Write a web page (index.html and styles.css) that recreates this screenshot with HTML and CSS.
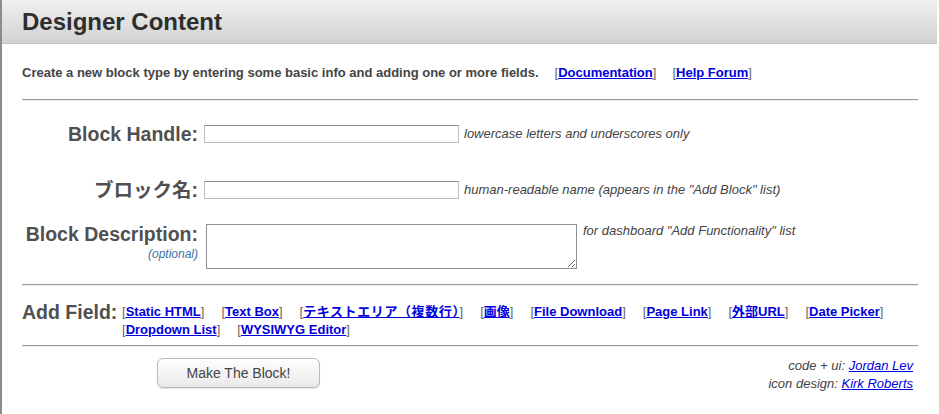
FILE: index.html
```html
<!DOCTYPE html>
<html>
<head>
<meta charset="utf-8">
<link rel="stylesheet" href="styles.css">
</head>
<body>
<div class="dialog">
  <div class="header"><h1 class="title">Designer Content</h1></div>
  <div class="content">
    <p class="intro">Create a new block type by entering some basic info and adding one or more fields.<span class="intro-links"><span class="br">[</span><a href="#">Documentation</a><span class="br">]</span></span><span class="intro-links"><span class="br">[</span><a href="#">Help Forum</a><span class="br">]</span></span></p>
    <div class="rule"></div>
    <div class="row row-handle">
      <label class="label">Block Handle:</label>
      <input class="input" type="text">
      <span class="hint">lowercase letters and underscores only</span>
    </div>
    <div class="row row-name">
      <label class="label">ブロック名:</label>
      <input class="input" type="text">
      <span class="hint">human-readable name (appears in the "Add Block" list)</span>
    </div>
    <div class="row row-desc">
      <div class="label-col">
        <label class="label">Block Description:</label>
        <span class="optional">(optional)</span>
      </div>
      <textarea class="textarea"></textarea>
      <span class="hint hint-desc">for dashboard "Add Functionality" list</span>
    </div>
    <div class="rule rule-2"></div>
    <div class="add-field">
      <span class="add-label">Add Field:</span>
      <div class="field-links">
        <span class="fl"><span class="br">[</span><a href="#">Static HTML</a><span class="br">]</span></span>
        <span class="fl"><span class="br">[</span><a href="#">Text Box</a><span class="br">]</span></span>
        <span class="fl"><span class="br">[</span><a class="jp" href="#">テキストエリア（複数行）</a><span class="br">]</span></span>
        <span class="fl"><span class="br">[</span><a href="#">画像</a><span class="br">]</span></span>
        <span class="fl"><span class="br">[</span><a href="#">File Download</a><span class="br">]</span></span>
        <span class="fl"><span class="br">[</span><a href="#">Page Link</a><span class="br">]</span></span>
        <span class="fl"><span class="br">[</span><a href="#">外部URL</a><span class="br">]</span></span>
        <span class="fl"><span class="br">[</span><a href="#">Date Picker</a><span class="br">]</span></span>
        <span class="fl"><span class="br">[</span><a href="#">Dropdown List</a><span class="br">]</span></span>
        <span class="fl"><span class="br">[</span><a href="#">WYSIWYG Editor</a><span class="br">]</span></span>
      </div>
    </div>
    <div class="rule rule-3"></div>
    <div class="footer">
      <button class="make-btn" type="button">Make The Block!</button>
      <div class="credits">
        <div>code + ui: <a href="#">Jordan Lev</a></div>
        <div>icon design: <a href="#">Kirk Roberts</a></div>
      </div>
    </div>
  </div>
</div>
</body>
</html>
```
FILE: styles.css
```css
html, body {
  margin: 0;
  padding: 0;
  background: #ffffff;
}
body {
  font-family: "Liberation Sans", Arial, "Noto Sans CJK JP", sans-serif;
  color: #444;
}
.dialog {
  height: 414px;
  border-left: 2px solid #8c8c8c;
  box-sizing: border-box;
  background: #fff;
  overflow: hidden;
}
.header {
  height: 43px;
  background: linear-gradient(#f0f0f0, #d2d2d2);
  border-bottom: 1px solid #c2c2c2;
  padding-left: 20px;
  margin-right: 2px;
}
.title {
  margin: 0;
  font-size: 24px;
  line-height: 43px;
  font-weight: bold;
  color: #2e2e2e;
}
.content {
  padding: 0 21px 0 20px;
}
.intro {
  margin: 0;
  padding-top: 20px;
  font-size: 13px;
  line-height: 18px;
  font-weight: bold;
  color: #444;
  white-space: nowrap;
}
.intro-links {
  margin-left: 16px;
  font-size: 13px;
}
.br {
  font-weight: normal;
  color: #666;
}
a {
  color: #0000dd;
  text-decoration: underline;
  font-weight: bold;
}
a.jp {
  letter-spacing: 0.6px;
}
.rule {
  margin-top: 17px;
  border-top: 1px solid #9a9a9a;
  border-bottom: 1px solid #eeeeee;
}
.row {
  display: flex;
  align-items: center;
}
.row-handle { margin-top: 24px; }
.row-name { margin-top: 38px; }
.row-desc {
  margin-top: 25px;
  align-items: flex-start;
}
.label {
  width: 176px;
  text-align: right;
  font-size: 19.5px;
  font-weight: bold;
  color: #505050;
  line-height: 18px;
  flex: none;
  white-space: nowrap;
}
.label-col {
  width: 176px;
  flex: none;
  display: flex;
  flex-direction: column;
  align-items: flex-end;
}
.label-col .label {
  width: auto;
  line-height: 20px;
}
.optional {
  margin-top: 1px;
  font-size: 12px;
  font-style: italic;
  color: #3c70a6;
  line-height: 18px;
}
.input {
  width: 255px;
  height: 18px;
  box-sizing: border-box;
  margin: 0 0 0 6px;
  padding: 0;
  border: 1px solid #bcbcbc;
  border-top-color: #8e8e8e;
  background: #fff;
  flex: none;
}
.textarea {
  width: 371px;
  height: 45px;
  box-sizing: border-box;
  margin: 0 0 0 8px;
  padding: 0;
  border: 1px solid #8f8f8f;
  background: #fff;
  flex: none;
}
.hint {
  margin-left: 5px;
  font-size: 13px;
  font-style: italic;
  color: #444;
  line-height: 18px;
  white-space: nowrap;
}
.hint-desc {
  margin-left: 6px;
  margin-top: -2px;
}
.rule-2 { margin-top: 15px; }
.add-field {
  display: flex;
  align-items: flex-start;
  margin-top: 17px;
}
.add-label {
  width: 100px;
  flex: none;
  font-size: 19.5px;
  font-weight: bold;
  color: #505050;
  line-height: 18px;
  white-space: nowrap;
}
.field-links {
  display: flex;
  flex-wrap: wrap;
  column-gap: 17px;
  font-size: 13px;
  line-height: 18px;
}
.rule-3 { margin-top: 6px; }
.footer {
  display: flex;
  justify-content: space-between;
  align-items: flex-start;
}
.make-btn {
  margin: 11px 0 0 135px;
  width: 163px;
  height: 30px;
  border: 1px solid #b9b9b9;
  border-radius: 6px;
  background: linear-gradient(#fefefe, #e9e9e9);
  box-shadow: 0 1px 1px rgba(0, 0, 0, 0.12);
  font-family: "Liberation Sans", Arial, sans-serif;
  font-size: 14px;
  color: #444;
  padding: 0;
}
.credits {
  margin-top: 10px;
  margin-right: 5px;
  text-align: right;
  font-size: 13px;
  font-style: italic;
  line-height: 18px;
  color: #444;
}
.credits a {
  font-weight: normal;
}
```
